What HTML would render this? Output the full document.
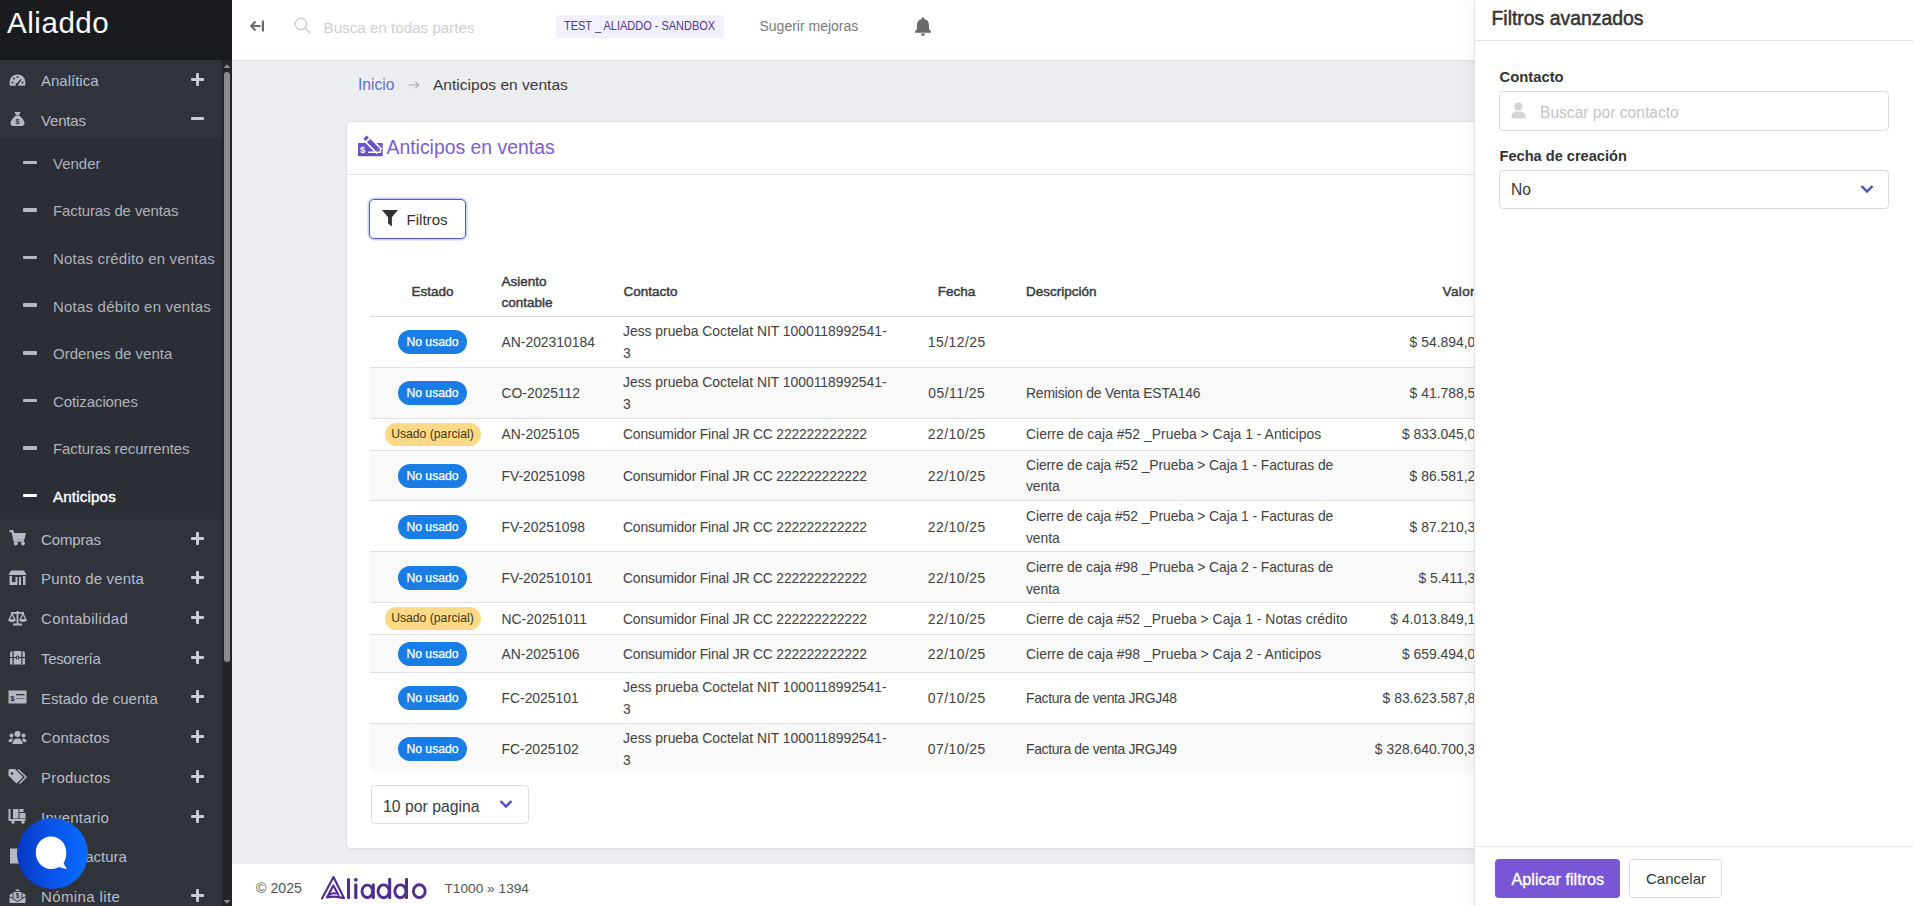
<!DOCTYPE html><html><head><meta charset="utf-8"><style>
*{margin:0;padding:0;box-sizing:border-box}
html,body{width:1913px;height:906px;overflow:hidden}
body{font-family:"Liberation Sans",sans-serif;background:#ecedf0;position:relative;color:#333}
.a{position:absolute;white-space:nowrap}
#sb{position:absolute;left:0;top:0;width:232px;height:906px;background:#30333a;overflow:hidden}
#sbtop{position:absolute;left:0;top:0;width:232px;height:60px;background:#1a1b1f}
#logo{position:absolute;left:7px;top:3px;font-size:29.5px;color:#fff;line-height:40px;letter-spacing:0.55px}
#sub{position:absolute;left:0;top:138px;width:222px;height:381px;background:#2b2e35}
.mi{position:absolute;left:41px;font-size:15px;color:#b8bdc7;line-height:18px;white-space:nowrap}
.si{position:absolute;left:53px;font-size:15px;color:#aeb3bc;line-height:18px;white-space:nowrap}
.pl{position:absolute;left:191px;width:13px;height:13px}
.pl:before{content:"";position:absolute;left:0;top:5px;width:13px;height:3px;background:#c9ccd3;border-radius:1px}
.pl.p:after{content:"";position:absolute;left:5px;top:0;width:3px;height:13px;background:#c9ccd3;border-radius:1px}
.dash{position:absolute;left:23px;width:14px;height:3.5px;background:#b5b9c1;border-radius:1px}
.ic{position:absolute;left:8px;width:19px;height:16px}
.ic svg{display:block;width:19px;height:16px}
#track{position:absolute;left:222px;top:60px;width:10px;height:846px;background:#232529}
#thumb{position:absolute;left:223.5px;top:72px;width:6px;height:590px;background:#8b8d91;border-radius:3px}
#top{position:absolute;left:232px;top:0;width:1242px;height:60px;background:#fff;box-shadow:0 1px 1px rgba(0,0,0,.06)}
#card{position:absolute;left:345.5px;top:120.5px;width:1300px;height:728px;background:#fff;border:1px solid #dfe0e2;border-radius:5px;box-shadow:0 1px 2px rgba(0,0,0,.04)}
#footer{position:absolute;left:232px;top:864px;width:1242px;height:42px;background:#fff}
#panel{position:absolute;left:1474px;top:0;width:439px;height:906px;background:#fff;border-left:1px solid #e3e3e3;box-shadow:-4px 0 14px rgba(0,0,0,.045)}
.row{position:absolute;left:370px;width:1200px;border-bottom:1px solid #dee0e3}
.row.s{background:#f8f8f8}
.c{position:absolute;top:0;height:100%;display:flex;align-items:center;font-size:14px;line-height:21.5px;color:#424242;white-space:nowrap}
.badge{display:inline-block;border-radius:12px;font-size:12.2px;text-align:center}
.nu{width:69px;height:24px;line-height:24px;background:#1a7de6;color:#fff;-webkit-text-stroke:0.25px #fff}
.up{width:96px;height:23px;line-height:23px;background:#fcd984;color:#3f3720}
.th{position:absolute;font-size:13.5px;color:#363b42;-webkit-text-stroke:0.45px #363b42;line-height:21px;white-space:nowrap}
</style></head><body>
<div id="sb"><div id="sbtop"><div id="logo">Aliaddo</div></div><div id="sub"></div>
<div class="ic" style="top:71.5px"><svg viewBox="0 0 19 16"><path d="M9.5 2.5A8 8 0 0 0 1.5 10.5c0 1.2.2 2.2.6 3.2h14.8c.4-1 .6-2 .6-3.2a8 8 0 0 0-8-8z" fill="#b3b9c5"/><circle cx="4.5" cy="10.5" r="1" fill="#30333a"/><circle cx="6" cy="6.5" r="1" fill="#30333a"/><circle cx="9.5" cy="5" r="1" fill="#30333a"/><circle cx="14.5" cy="10.5" r="1" fill="#30333a"/><path d="M9 12.5l4-5" stroke="#30333a" stroke-width="1.4"/><circle cx="9" cy="12.5" r="1.5" fill="#30333a"/></svg></div>
<div class="mi" style="top:71.8px;letter-spacing:0.000px">Analítica</div>
<div class="pl p" style="top:72.7px"></div>
<div class="ic" style="top:111.3px"><svg viewBox="0 0 19 16"><path d="M6.5 1h6l-1.5 3h-3z" fill="#b3b9c5"/><path d="M7.8 4.5h3.4c2.5 2 5.3 5 5.3 8 0 1.6-1.2 2.5-2.8 2.5H5.3c-1.6 0-2.8-.9-2.8-2.5 0-3 2.8-6 5.3-8z" fill="#b3b9c5"/><text x="9.5" y="13" font-size="7" font-family="Liberation Sans" font-weight="bold" fill="#30333a" text-anchor="middle">$</text></svg></div>
<div class="mi" style="top:111.6px;letter-spacing:-0.180px">Ventas</div>
<div class="pl m" style="top:111.8px"></div>
<div class="ic" style="top:530.4px"><svg viewBox="0 0 19 16"><path d="M1.5 1.2h3l2 9.5h9.5" fill="none" stroke="#b3b9c5" stroke-width="2.2" stroke-linejoin="round"/><path d="M5.2 3h12.8l-1.6 6.8H6.6z" fill="#b3b9c5"/><circle cx="7.8" cy="13.6" r="2" fill="#b3b9c5"/><circle cx="15" cy="13.6" r="2" fill="#b3b9c5"/></svg></div>
<div class="mi" style="top:530.7px;letter-spacing:-0.133px">Compras</div>
<div class="pl p" style="top:531.6px"></div>
<div class="ic" style="top:570.1px"><svg viewBox="0 0 19 16"><path d="M3 0.5h13l2.5 4.5H0.5z" fill="#b3b9c5"/><rect x="1.5" y="6" width="2.5" height="9" fill="#b3b9c5"/><rect x="15" y="6" width="2.5" height="9" fill="#b3b9c5"/><rect x="4" y="12" width="5.5" height="3" fill="#b3b9c5"/><rect x="7.5" y="7" width="2" height="6" fill="#b3b9c5"/><rect x="11" y="7" width="2" height="8" fill="#b3b9c5"/></svg></div>
<div class="mi" style="top:570.4px;letter-spacing:0.146px">Punto de venta</div>
<div class="pl p" style="top:571.3px"></div>
<div class="ic" style="top:609.8px"><svg viewBox="0 0 19 16"><rect x="8.6" y="1" width="1.8" height="13" fill="#b3b9c5"/><rect x="3" y="2" width="13" height="1.8" fill="#b3b9c5"/><rect x="5" y="13.5" width="9" height="2" fill="#b3b9c5"/><path d="M4 3.5L1 10h6z" fill="none" stroke="#b3b9c5" stroke-width="1.3"/><path d="M0.8 10h6.4a3.2 2 0 0 1-6.4 0z" fill="#b3b9c5"/><path d="M15 3.5L12 10h6z" fill="none" stroke="#b3b9c5" stroke-width="1.3"/><path d="M11.8 10h6.4a3.2 2 0 0 1-6.4 0z" fill="#b3b9c5"/></svg></div>
<div class="mi" style="top:610.1px;letter-spacing:0.309px">Contabilidad</div>
<div class="pl p" style="top:611.0px"></div>
<div class="ic" style="top:649.5px"><svg viewBox="0 0 19 16"><path d="M2 4a3 3 0 0 1 3-3h9a3 3 0 0 1 3 3v10.5H2z" fill="#b3b9c5"/><rect x="4.5" y="1" width="1.2" height="13.5" fill="#30333a"/><rect x="13.3" y="1" width="1.2" height="13.5" fill="#30333a"/><rect x="2" y="7" width="15" height="1.1" fill="#30333a"/><rect x="8" y="5.8" width="3" height="3.5" fill="#30333a"/><rect x="8.8" y="6.6" width="1.4" height="1.9" fill="#b3b9c5"/></svg></div>
<div class="mi" style="top:649.8px;letter-spacing:-0.350px">Tesorería</div>
<div class="pl p" style="top:650.7px"></div>
<div class="ic" style="top:689.2px"><svg viewBox="0 0 19 16"><rect x="0.5" y="1.5" width="18" height="13" fill="#b3b9c5"/><text x="4.5" y="11.5" font-size="8" font-family="Liberation Sans" font-weight="bold" fill="#30333a" text-anchor="middle">$</text><rect x="8" y="5" width="8.5" height="1.3" fill="#30333a"/><rect x="8" y="9" width="8.5" height="1" fill="#6d717a"/></svg></div>
<div class="mi" style="top:689.5px;letter-spacing:0.000px">Estado de cuenta</div>
<div class="pl p" style="top:690.4px"></div>
<div class="ic" style="top:728.9px"><svg viewBox="0 0 19 16"><circle cx="9.5" cy="5" r="3" fill="#b3b9c5"/><path d="M4.5 15c0-3.5 2-5.5 5-5.5s5 2 5 5.5z" fill="#b3b9c5"/><circle cx="3.5" cy="6.5" r="2" fill="#b3b9c5"/><path d="M0.5 13c0-2.3 1.3-3.5 3-3.5 1 0 1.5.3 1.5.3-.6.8-1 2-1 3.2z" fill="#b3b9c5"/><circle cx="15.5" cy="6.5" r="2" fill="#b3b9c5"/><path d="M18.5 13c0-2.3-1.3-3.5-3-3.5-1 0-1.5.3-1.5.3.6.8 1 2 1 3.2z" fill="#b3b9c5"/></svg></div>
<div class="mi" style="top:729.2px;letter-spacing:0.125px">Contactos</div>
<div class="pl p" style="top:730.1px"></div>
<div class="ic" style="top:768.6px"><svg viewBox="0 0 19 16"><path d="M0.5 1v5.5l8 8 6.5-6.5-8-8H1.5z" fill="#b3b9c5"/><circle cx="4" cy="4.5" r="1.3" fill="#30333a"/><path d="M10 0.5l8 7.5-6.5 6.5" fill="none" stroke="#b3b9c5" stroke-width="1.5"/></svg></div>
<div class="mi" style="top:768.9px;letter-spacing:0.212px">Productos</div>
<div class="pl p" style="top:769.8px"></div>
<div class="ic" style="top:808.3px"><svg viewBox="0 0 19 16"><path d="M1.5 1v11h16" fill="none" stroke="#b3b9c5" stroke-width="2"/><rect x="5" y="1" width="5.5" height="9.5" fill="#b3b9c5"/><rect x="11.5" y="5" width="6" height="5.5" fill="#b3b9c5"/><rect x="11.5" y="1" width="4" height="3" fill="#b3b9c5"/><circle cx="5" cy="14.2" r="1.6" fill="#b3b9c5"/><circle cx="15" cy="14.2" r="1.6" fill="#b3b9c5"/></svg></div>
<div class="mi" style="top:808.6px;letter-spacing:0.222px">Inventario</div>
<div class="pl p" style="top:809.5px"></div>
<div class="ic" style="top:848.0px"><svg viewBox="0 0 19 16"><path d="M2 0.5h8l4 4v11H2z" fill="#b3b9c5"/></svg></div>
<div class="mi" style="top:848.3px;left:76px">Factura</div>
<div class="ic" style="top:887.7px"><svg viewBox="0 0 19 16"><path d="M1.5 7L9.5 1l8 6v8h-16z" fill="#b3b9c5"/><rect x="4.5" y="3" width="10" height="7" fill="#30333a"/><path d="M5.5 4h8v5.5l-4 2.5-4-2.5z" fill="#b3b9c5"/><text x="9.5" y="9.8" font-size="6.5" font-family="Liberation Sans" font-weight="bold" fill="#30333a" text-anchor="middle">$</text><path d="M1.5 8.5l8 5 8-5" fill="none" stroke="#30333a" stroke-width="1"/></svg></div>
<div class="mi" style="top:888.0px;letter-spacing:0.390px">Nómina lite</div>
<div class="pl p" style="top:888.9px"></div>
<div class="dash" style="top:160.8px"></div>
<div class="si" style="top:154.8px;letter-spacing:0.000px">Vender</div>
<div class="dash" style="top:208.4px"></div>
<div class="si" style="top:202.4px;letter-spacing:-0.124px">Facturas de ventas</div>
<div class="dash" style="top:255.9px"></div>
<div class="si" style="top:249.9px;letter-spacing:0.186px">Notas crédito en ventas</div>
<div class="dash" style="top:303.4px"></div>
<div class="si" style="top:297.5px;letter-spacing:0.210px">Notas débito en ventas</div>
<div class="dash" style="top:351.0px"></div>
<div class="si" style="top:345.0px;letter-spacing:0.000px">Ordenes de venta</div>
<div class="dash" style="top:398.6px"></div>
<div class="si" style="top:392.6px;letter-spacing:-0.091px">Cotizaciones</div>
<div class="dash" style="top:446.1px"></div>
<div class="si" style="top:440.1px;letter-spacing:-0.100px">Facturas recurrentes</div>
<div class="dash" style="top:493.6px;background:#fff"></div>
<div class="si" style="letter-spacing:0.138px;color:#fff;font-size:15.2px;-webkit-text-stroke:0.4px #fff;top:487.6px">Anticipos</div>
<div id="track"></div><div id="thumb"></div>
<svg class="a" style="left:223px;top:62.5px" width="8" height="6" viewBox="0 0 8 6"><path d="M0.5 5L4 1.2 7.5 5z" fill="#8b8d91"/></svg>
<svg class="a" style="left:223px;top:899px" width="8" height="6" viewBox="0 0 8 6"><path d="M0.5 1L4 4.8 7.5 1z" fill="#8b8d91"/></svg>
</div>
<div class="a" style="left:16.5px;top:817.5px;width:71px;height:71px;border-radius:50%;background:linear-gradient(90deg,#0636c4 0%,#0a52e8 45%,#0a6cff 100%)"></div>
<svg class="a" style="left:35px;top:836px" width="34" height="35" viewBox="0 0 34 35"><path d="M16 0.5C7.5 0.5 0.8 7.3 0.8 16.5S7.5 33 16 33c3 0 5.5-.6 8-2l8 2.2-3.5-6C30.5 24.5 31.3 20.5 31.3 16.5 31.3 7.3 24.5 0.5 16 0.5z" fill="#fff"/></svg>
<div id="top"></div>
<svg class="a" style="left:250px;top:20px" width="15" height="12" viewBox="0 0 15 12"><path d="M1.5 6h9M5.5 1.5L1.2 6l4.3 4.5" fill="none" stroke="#6b6b6b" stroke-width="2.2"/><rect x="11.8" y="0.5" width="2.2" height="11" fill="#6b6b6b"/></svg>
<svg class="a" style="left:294px;top:17px" width="18" height="17" viewBox="0 0 18 17"><circle cx="7" cy="7" r="5.7" fill="none" stroke="#cfcfcf" stroke-width="1.5"/><path d="M11.2 11.2l5 5" stroke="#cfcfcf" stroke-width="1.6"/></svg>
<div class="a" style="left:323.5px;top:18.6px;font-size:15.2px;line-height:18px;color:#cfcfcf">Busca en todas partes</div>
<div class="a" style="left:555.5px;top:14.5px;width:168.5px;height:23px;background:#f3f0fd;border-radius:4px"></div>
<div class="a" style="left:564px;top:16.9px;font-size:13.4px;line-height:18px;color:#4a3b8f;transform:scaleX(0.82);transform-origin:0 0">TEST _ ALIADDO - SANDBOX</div>
<div class="a" style="left:759.5px;top:17.3px;font-size:14px;line-height:18px;color:#7a7a7a">Sugerir mejoras</div>
<svg class="a" style="left:914px;top:16px" width="18" height="20" viewBox="0 0 18 20"><path d="M9 1.2c-.8 0-1.3.6-1.3 1.3v.6C4.8 3.7 3 6 3 9v4.2L1 15.5v1.3h16v-1.3l-2-2.3V9c0-3-1.8-5.3-4.7-5.9v-.6c0-.7-.5-1.3-1.3-1.3z" fill="#6a6a6a"/><path d="M6.8 17.6a2.2 2.2 0 0 0 4.4 0z" fill="#6a6a6a"/></svg>
<div class="a" style="left:358px;top:76.1px;font-size:15.6px;line-height:18px;color:#6470c4">Inicio</div>
<svg class="a" style="left:408px;top:81px" width="12" height="8" viewBox="0 0 12 8"><path d="M0.5 4h10M7.5 1l3.2 3-3.2 3" fill="none" stroke="#a9abb0" stroke-width="1.1"/></svg>
<div class="a" style="left:433px;top:76.1px;font-size:15.55px;line-height:18px;color:#3a3a3a">Anticipos en ventas</div>
<div id="card"></div>
<div class="a" style="left:347px;top:173.5px;width:1200px;height:1px;background:#e3e5e8"></div>
<svg class="a" style="left:352px;top:130px" width="40" height="32" viewBox="0 0 40 32"><rect x="6" y="13" width="24.7" height="13.3" rx="0.8" fill="#6b51c8"/><path d="M12.5 6.5L27.5 21.5" stroke="#fff" stroke-width="8"/><path d="M16.6 10.6L25.6 19.6" stroke="#6b51c8" stroke-width="4.6"/><path d="M23.3 21.9L27.9 17.3L28.6 22.6z" fill="#6b51c8"/><path d="M13 7.2L15.2 9.4" stroke="#6b51c8" stroke-width="4.6"/><path d="M16.2 22.3H28.4V18" fill="none" stroke="#fff" stroke-width="1.4"/><text x="10.6" y="23.3" font-size="9.5" font-family="Liberation Sans" font-weight="bold" fill="#fff" text-anchor="middle">$</text></svg>
<div class="a" style="left:386.5px;top:135.2px;font-size:19.4px;line-height:24px;color:#7b5ed0">Anticipos en ventas</div>
<div class="a" style="left:369px;top:198.5px;width:97px;height:40px;border-radius:5px;border:1px solid #4f5fab;box-shadow:0 0 0 1.5px #c9d1f6"></div>
<svg class="a" style="left:382px;top:210px" width="16" height="17" viewBox="0 0 16 17"><path d="M0 0h16L9.9 7.2v9.3L6.1 13.6V7.2z" fill="#333"/></svg>
<div class="a" style="left:406.5px;top:210.6px;font-size:15.1px;line-height:18px;color:#333">Filtros</div>
<div class="th" style="left:332.5px;width:200px;text-align:center;top:280.9px">Estado</div>
<div class="th" style="left:501.5px;top:270.8px">Asiento</div>
<div class="th" style="left:501.5px;top:291.5px">contable</div>
<div class="th" style="left:623.4px;top:280.9px">Contacto</div>
<div class="th" style="left:856.5px;width:200px;text-align:center;top:280.9px">Fecha</div>
<div class="th" style="left:1026px;top:280.9px">Descripción</div>
<div class="th" style="letter-spacing:0.4px;left:1275px;width:200px;text-align:right;top:280.9px">Valor</div>
<div class="a" style="left:370px;top:316px;width:1150px;height:1px;background:#d9dcdf"></div>
<div class="a" style="left:370px;top:317px;width:1150px;height:50px;background:#fff"></div>
<div class="a" style="left:370px;top:367px;width:1150px;height:1px;background:#dfe1e4"></div>
<div class="c" style="left:398.0px;top:317.0px;height:50px"><span class="badge nu">No usado</span></div>
<div class="c" style="left:501.5px;top:317.8px;height:50px;font-size:13.9px">AN-202310184</div>
<div class="c" style="left:623px;top:317.8px;height:50px;font-size:13.9px;letter-spacing:-0.02px">Jess prueba Coctelat NIT 1000118992541-<br>3</div>
<div class="c" style="left:906.5px;width:100px;justify-content:center;top:317.8px;height:50px;font-size:13.9px;letter-spacing:0.5px;padding-left:0.5px">15/12/25</div>
<div class="c" style="left:1283px;width:200px;justify-content:flex-end;top:317.8px;height:50px;font-size:13.9px">$ 54.894,00</div>
<div class="a" style="left:370px;top:368px;width:1150px;height:50px;background:#f9f9f9"></div>
<div class="a" style="left:370px;top:418px;width:1150px;height:1px;background:#dfe1e4"></div>
<div class="c" style="left:398.0px;top:368.0px;height:50px"><span class="badge nu">No usado</span></div>
<div class="c" style="left:501.5px;top:368.8px;height:50px;font-size:13.9px">CO-2025112</div>
<div class="c" style="left:623px;top:368.8px;height:50px;font-size:13.9px;letter-spacing:-0.02px">Jess prueba Coctelat NIT 1000118992541-<br>3</div>
<div class="c" style="left:906.5px;width:100px;justify-content:center;top:368.8px;height:50px;font-size:13.9px;letter-spacing:0.5px;padding-left:0.5px">05/11/25</div>
<div class="c" style="left:1026px;top:368.8px;height:50px;font-size:13.9px;letter-spacing:-0.18px">Remision de Venta ESTA146</div>
<div class="c" style="left:1283px;width:200px;justify-content:flex-end;top:368.8px;height:50px;font-size:13.9px">$ 41.788,54</div>
<div class="a" style="left:370px;top:419px;width:1150px;height:31px;background:#fff"></div>
<div class="a" style="left:370px;top:450px;width:1150px;height:1px;background:#dfe1e4"></div>
<div class="c" style="left:384.5px;top:419.0px;height:31px"><span class="badge up">Usado (parcial)</span></div>
<div class="c" style="left:501.5px;top:418.8px;height:31px;font-size:13.9px">AN-2025105</div>
<div class="c" style="left:623px;top:418.8px;height:31px;font-size:13.9px;letter-spacing:-0.18px">Consumidor Final JR CC 222222222222</div>
<div class="c" style="left:906.5px;width:100px;justify-content:center;top:418.8px;height:31px;font-size:13.9px;letter-spacing:0.5px;padding-left:0.5px">22/10/25</div>
<div class="c" style="left:1026px;top:418.8px;height:31px;font-size:13.9px;letter-spacing:0.03px">Cierre de caja #52 _Prueba &gt; Caja 1 - Anticipos</div>
<div class="c" style="left:1283px;width:200px;justify-content:flex-end;top:418.8px;height:31px;font-size:13.9px">$ 833.045,00</div>
<div class="a" style="left:370px;top:451px;width:1150px;height:49px;background:#f9f9f9"></div>
<div class="a" style="left:370px;top:500px;width:1150px;height:1px;background:#dfe1e4"></div>
<div class="c" style="left:398.0px;top:451.0px;height:49px"><span class="badge nu">No usado</span></div>
<div class="c" style="left:501.5px;top:451.8px;height:49px;font-size:13.9px">FV-20251098</div>
<div class="c" style="left:623px;top:451.8px;height:49px;font-size:13.9px;letter-spacing:-0.18px">Consumidor Final JR CC 222222222222</div>
<div class="c" style="left:906.5px;width:100px;justify-content:center;top:451.8px;height:49px;font-size:13.9px;letter-spacing:0.5px;padding-left:0.5px">22/10/25</div>
<div class="c" style="left:1026px;top:451.8px;height:49px;font-size:13.9px;letter-spacing:-0.09px">Cierre de caja #52 _Prueba &gt; Caja 1 - Facturas de<br>venta</div>
<div class="c" style="left:1283px;width:200px;justify-content:flex-end;top:451.8px;height:49px;font-size:13.9px">$ 86.581,24</div>
<div class="a" style="left:370px;top:501px;width:1150px;height:50px;background:#fff"></div>
<div class="a" style="left:370px;top:551px;width:1150px;height:1px;background:#dfe1e4"></div>
<div class="c" style="left:398.0px;top:501.6px;height:50px"><span class="badge nu">No usado</span></div>
<div class="c" style="left:501.5px;top:502.8px;height:50px;font-size:13.9px">FV-20251098</div>
<div class="c" style="left:623px;top:502.8px;height:50px;font-size:13.9px;letter-spacing:-0.18px">Consumidor Final JR CC 222222222222</div>
<div class="c" style="left:906.5px;width:100px;justify-content:center;top:502.8px;height:50px;font-size:13.9px;letter-spacing:0.5px;padding-left:0.5px">22/10/25</div>
<div class="c" style="left:1026px;top:502.8px;height:50px;font-size:13.9px;letter-spacing:-0.09px">Cierre de caja #52 _Prueba &gt; Caja 1 - Facturas de<br>venta</div>
<div class="c" style="left:1283px;width:200px;justify-content:flex-end;top:502.8px;height:50px;font-size:13.9px">$ 87.210,34</div>
<div class="a" style="left:370px;top:552px;width:1150px;height:50px;background:#f9f9f9"></div>
<div class="a" style="left:370px;top:602px;width:1150px;height:1px;background:#dfe1e4"></div>
<div class="c" style="left:398.0px;top:552.6px;height:50px"><span class="badge nu">No usado</span></div>
<div class="c" style="left:501.5px;top:553.8px;height:50px;font-size:13.9px">FV-202510101</div>
<div class="c" style="left:623px;top:553.8px;height:50px;font-size:13.9px;letter-spacing:-0.18px">Consumidor Final JR CC 222222222222</div>
<div class="c" style="left:906.5px;width:100px;justify-content:center;top:553.8px;height:50px;font-size:13.9px;letter-spacing:0.5px;padding-left:0.5px">22/10/25</div>
<div class="c" style="left:1026px;top:553.8px;height:50px;font-size:13.9px;letter-spacing:-0.09px">Cierre de caja #98 _Prueba &gt; Caja 2 - Facturas de<br>venta</div>
<div class="c" style="left:1283px;width:200px;justify-content:flex-end;top:553.8px;height:50px;font-size:13.9px">$ 5.411,34</div>
<div class="a" style="left:370px;top:603px;width:1150px;height:31px;background:#fff"></div>
<div class="a" style="left:370px;top:634px;width:1150px;height:1px;background:#dfe1e4"></div>
<div class="c" style="left:384.5px;top:603.0px;height:31px"><span class="badge up">Usado (parcial)</span></div>
<div class="c" style="left:501.5px;top:603.8px;height:31px;font-size:13.9px">NC-20251011</div>
<div class="c" style="left:623px;top:603.8px;height:31px;font-size:13.9px;letter-spacing:-0.18px">Consumidor Final JR CC 222222222222</div>
<div class="c" style="left:906.5px;width:100px;justify-content:center;top:603.8px;height:31px;font-size:13.9px;letter-spacing:0.5px;padding-left:0.5px">22/10/25</div>
<div class="c" style="left:1026px;top:603.8px;height:31px;font-size:13.9px;letter-spacing:0.03px">Cierre de caja #52 _Prueba &gt; Caja 1 - Notas crédito</div>
<div class="c" style="left:1283px;width:200px;justify-content:flex-end;top:603.8px;height:31px;font-size:13.9px">$ 4.013.849,14</div>
<div class="a" style="left:370px;top:635px;width:1150px;height:37px;background:#f9f9f9"></div>
<div class="a" style="left:370px;top:672px;width:1150px;height:1px;background:#dfe1e4"></div>
<div class="c" style="left:398.0px;top:635.0px;height:37px"><span class="badge nu">No usado</span></div>
<div class="c" style="left:501.5px;top:635.8px;height:37px;font-size:13.9px">AN-2025106</div>
<div class="c" style="left:623px;top:635.8px;height:37px;font-size:13.9px;letter-spacing:-0.18px">Consumidor Final JR CC 222222222222</div>
<div class="c" style="left:906.5px;width:100px;justify-content:center;top:635.8px;height:37px;font-size:13.9px;letter-spacing:0.5px;padding-left:0.5px">22/10/25</div>
<div class="c" style="left:1026px;top:635.8px;height:37px;font-size:13.9px;letter-spacing:0.03px">Cierre de caja #98 _Prueba &gt; Caja 2 - Anticipos</div>
<div class="c" style="left:1283px;width:200px;justify-content:flex-end;top:635.8px;height:37px;font-size:13.9px">$ 659.494,00</div>
<div class="a" style="left:370px;top:673px;width:1150px;height:50px;background:#fff"></div>
<div class="a" style="left:370px;top:723px;width:1150px;height:1px;background:#dfe1e4"></div>
<div class="c" style="left:398.0px;top:673.0px;height:50px"><span class="badge nu">No usado</span></div>
<div class="c" style="left:501.5px;top:673.8px;height:50px;font-size:13.9px">FC-2025101</div>
<div class="c" style="left:623px;top:673.8px;height:50px;font-size:13.9px;letter-spacing:-0.02px">Jess prueba Coctelat NIT 1000118992541-<br>3</div>
<div class="c" style="left:906.5px;width:100px;justify-content:center;top:673.8px;height:50px;font-size:13.9px;letter-spacing:0.5px;padding-left:0.5px">07/10/25</div>
<div class="c" style="left:1026px;top:673.8px;height:50px;font-size:13.9px;letter-spacing:-0.33px">Factura de venta JRGJ48</div>
<div class="c" style="left:1283px;width:200px;justify-content:flex-end;top:673.8px;height:50px;font-size:13.9px">$ 83.623.587,84</div>
<div class="a" style="left:370px;top:724px;width:1150px;height:48px;background:#f9f9f9"></div>
<div class="c" style="left:398.0px;top:724.6px;height:48px"><span class="badge nu">No usado</span></div>
<div class="c" style="left:501.5px;top:725.8px;height:48px;font-size:13.9px">FC-2025102</div>
<div class="c" style="left:623px;top:725.8px;height:48px;font-size:13.9px;letter-spacing:-0.02px">Jess prueba Coctelat NIT 1000118992541-<br>3</div>
<div class="c" style="left:906.5px;width:100px;justify-content:center;top:725.8px;height:48px;font-size:13.9px;letter-spacing:0.5px;padding-left:0.5px">07/10/25</div>
<div class="c" style="left:1026px;top:725.8px;height:48px;font-size:13.9px;letter-spacing:-0.33px">Factura de venta JRGJ49</div>
<div class="c" style="left:1283px;width:200px;justify-content:flex-end;top:725.8px;height:48px;font-size:13.9px">$ 328.640.700,37</div>
<div class="a" style="left:370.5px;top:785px;width:158px;height:38.5px;border:1px solid #dcdfe3;border-radius:4px;background:#fff"></div>
<div class="a" style="left:383px;top:798.3px;font-size:15.8px;line-height:18px;color:#3d3d3d">10 por pagina</div>
<svg class="a" style="left:499px;top:799px" width="14" height="10" viewBox="0 0 14 10"><path d="M1.5 2l5.5 5.5L12.5 2" fill="none" stroke="#4850b8" stroke-width="2.4"/></svg>
<div id="footer"></div>
<div class="a" style="left:256px;top:879.3px;font-size:14.2px;line-height:18px;color:#555">© 2025</div>
<svg class="a" style="left:315px;top:870px" width="120" height="34" viewBox="0 0 120 34"><g fill="none" stroke="#512c8f" stroke-width="2.1" stroke-linejoin="round" stroke-linecap="round"><path d="M7 28.5L18.5 7L29 28.2Q20 25.5 12 27.5L18.3 15.5L23.5 25"/><path d="M14.5 24.5Q18 22.8 21 23.5"/></g><g fill="#512c8f"><rect x="32" y="8.2" width="3" height="20.8" rx="1"/><rect x="39.2" y="13.4" width="3.2" height="15.6" rx="1"/><circle cx="40.8" cy="9.8" r="1.9"/></g><g fill="none" stroke="#512c8f" stroke-width="2.9"><ellipse cx="52.3" cy="21.3" rx="5.3" ry="6.2"/><ellipse cx="68.6" cy="21.3" rx="5.6" ry="6.4"/><ellipse cx="85.4" cy="21.3" rx="5.6" ry="6.4"/><ellipse cx="104.3" cy="21.2" rx="5.9" ry="6.4"/></g><g fill="#512c8f"><rect x="56.8" y="13.5" width="3" height="15.5" rx="1"/><rect x="73.2" y="8" width="3" height="21" rx="1"/><rect x="90" y="8" width="3" height="21" rx="1"/></g></svg>
<div class="a" style="left:444.5px;top:879.5px;font-size:13.7px;line-height:18px;color:#555">T1000 » 1394</div>
<div id="panel"></div>
<div class="a" style="left:1491.5px;top:6.4px;font-size:19.4px;line-height:24px;color:#333;-webkit-text-stroke:0.5px #333">Filtros avanzados</div>
<div class="a" style="left:1475px;top:40px;width:438px;height:1px;background:#e3e3e3"></div>
<div class="a" style="left:1499.5px;top:67.8px;font-size:14.8px;line-height:18px;color:#333;font-weight:bold">Contacto</div>
<div class="a" style="left:1499px;top:91px;width:390px;height:40px;border:1px solid #dcdcdc;border-radius:4px"></div>
<svg class="a" style="left:1511px;top:102px" width="15" height="17" viewBox="0 0 15 17"><circle cx="7.5" cy="4.5" r="4" fill="#d4d4d4"/><path d="M0.5 16.5v-2c0-3 2.2-5 5-5h4c2.8 0 5 2 5 5v2z" fill="#d4d4d4"/></svg>
<div class="a" style="left:1540px;top:103.8px;font-size:15.6px;line-height:18px;color:#c5c5c5">Buscar por contacto</div>
<div class="a" style="left:1499.5px;top:146.9px;font-size:14.6px;line-height:18px;color:#333;font-weight:bold">Fecha de creación</div>
<div class="a" style="left:1499px;top:170px;width:390px;height:39px;border:1px solid #dcdcdc;border-radius:4px"></div>
<div class="a" style="left:1511px;top:181.2px;font-size:15.6px;line-height:18px;color:#333">No</div>
<svg class="a" style="left:1860px;top:184px" width="14" height="10" viewBox="0 0 14 10"><path d="M1.5 2l5.5 5.5L12.5 2" fill="none" stroke="#4850b8" stroke-width="2.4"/></svg>
<div class="a" style="left:1475px;top:846px;width:438px;height:1px;background:#e8e8e8"></div>
<div class="a" style="left:1495px;top:859px;width:125px;height:39px;background:#7756d6;border-radius:4px"></div>
<div class="a" style="left:1511.5px;top:869.7px;font-size:16.2px;line-height:18px;color:#fff;-webkit-text-stroke:0.35px #fff">Aplicar filtros</div>
<div class="a" style="left:1628.5px;top:859px;width:93px;height:39px;border:1px solid #dcdcdc;border-radius:4px;background:#fff"></div>
<div class="a" style="left:1646px;top:870.1px;font-size:15px;line-height:18px;color:#333">Cancelar</div>
</body></html>
